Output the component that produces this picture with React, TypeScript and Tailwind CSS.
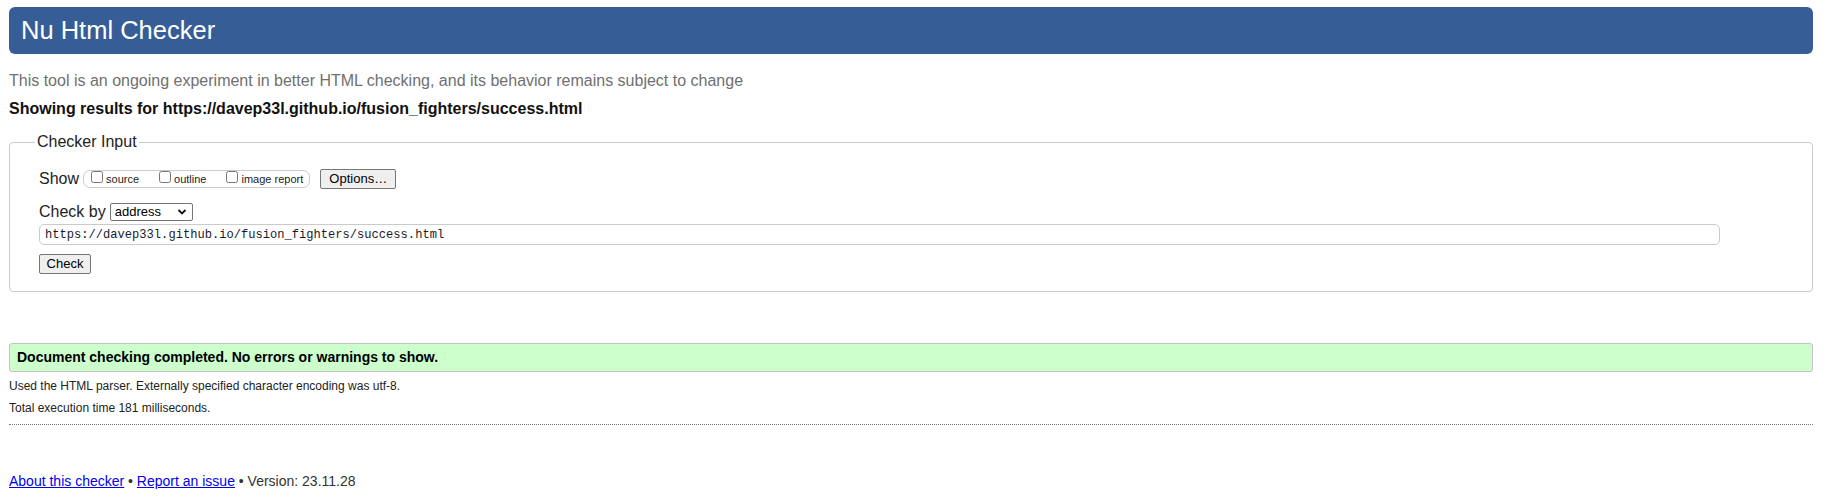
import React from 'react';

const sans = { fontFamily: '"Liberation Sans", Arial, sans-serif' };

function Box({ label }: { label: string }) {
    return (
        <label className="flex items-baseline">
            <input type="checkbox" className="m-0 w-[12px] h-[12px]" />
            <span className="ml-[3px] text-[11px] leading-[13px] text-[#222]">{label}</span>
        </label>
    );
}

export default function App() {
    return (
        <div className="bg-white min-h-[504px] text-[#111]" style={sans}>
            <div className="ml-[9px] w-[1804px] pt-[7px]">
                {/* Header */}
                <h1 className="h-[47px] rounded-[6px] bg-[#365d95] text-white text-[25.5px] pl-[12px] flex items-center">
                    Nu Html Checker
                </h1>

                <p className="mt-[17px] text-[16px] leading-[20px] text-[#707070]">
                    This tool is an ongoing experiment in better HTML checking, and its behavior remains subject to change
                </p>
                <p className="mt-[8px] text-[16px] leading-[20px] font-bold text-[#111]">
                    Showing results for https://davep33l.github.io/fusion_fighters/success.html
                </p>

                {/* Checker input */}
                <fieldset className="mt-[13px] border border-[#cbcbcb] rounded-[4px] pl-[29px] pb-[17px]">
                    <legend className="-ml-[4px] px-[2px] text-[16px] leading-[20px] text-[#222]">Checker Input</legend>

                    <div className="mt-[17px] flex items-center h-[20px]">
                        <span className="text-[16px] leading-[20px] text-[#222]">Show</span>
                        <div className="ml-[4px] h-[18px] flex items-start pl-[7px] pr-[6px] border border-[#cbcbcb] rounded-[7px]">
                            <div className="flex items-baseline gap-[20px]">
                                <Box label="source" />
                                <Box label="outline" />
                                <Box label="image report" />
                            </div>
                        </div>
                        <button className="ml-[10px] h-[20px] w-[76px] text-[13px] leading-[18px] bg-[#efefef] border border-[#767676] rounded-[2px] text-black">
                            Options…
                        </button>
                    </div>

                    <div className="mt-[14px] flex items-center h-[18px]">
                        <span className="text-[16px] leading-[20px] text-[#222]">Check by</span>
                        <div className="ml-[4px] w-[83px] h-[18px] flex items-center justify-between border border-[#767676] rounded-[2px] bg-white pl-[4px] pr-[4px]">
                            <span className="text-[13px] leading-[16px] text-black">address</span>
                            <svg width="10" height="10" viewBox="0 0 10 10" className="mr-[1px]">
                                <path d="M1.5 3 L5 6.5 L8.5 3" fill="none" stroke="#111" strokeWidth="1.8" />
                            </svg>
                        </div>
                    </div>

                    <div className="mt-[3px] w-[1681px] h-[21px] flex items-center border border-[#cbcbcb] rounded-[5px] pl-[5px] bg-white">
                        <span
                            className="text-[12.1px] leading-[16px] text-[#1a1a2a]"
                            style={{ fontFamily: '"Liberation Mono", "DejaVu Sans Mono", monospace' }}
                        >
                            https://davep33l.github.io/fusion_fighters/success.html
                        </span>
                    </div>

                    <button className="mt-[9px] block h-[20px] w-[52px] text-[13px] leading-[18px] bg-[#efefef] border border-[#767676] rounded-[2px] text-black">
                        Check
                    </button>
                </fieldset>

                {/* Result */}
                <div className="mt-[51px] h-[29px] flex items-center bg-[#ccffcc] border border-[#c4c4c4] rounded-[3px] pl-[7px]">
                    <span className="text-[14px] font-bold text-black">Document checking completed. No errors or warnings to show.</span>
                </div>
                <p className="mt-[4px] text-[12px] leading-[20px] text-[#222]">
                    Used the HTML parser. Externally specified character encoding was utf-8.
                </p>
                <p className="mt-[2px] text-[12px] leading-[20px] text-[#222]">Total execution time 181 milliseconds.</p>
                <div className="mt-[6px] border-t border-dotted border-[#777]" />

                {/* Footer */}
                <p className="mt-[46px] text-[14px] leading-[20px] text-[#333]">
                    <a href="#" className="text-[#0000ee] underline">About this checker</a>
                    {' • '}
                    <a href="#" className="text-[#0000ee] underline">Report an issue</a>
                    {' • Version: 23.11.28'}
                </p>
            </div>
        </div>
    );
}
